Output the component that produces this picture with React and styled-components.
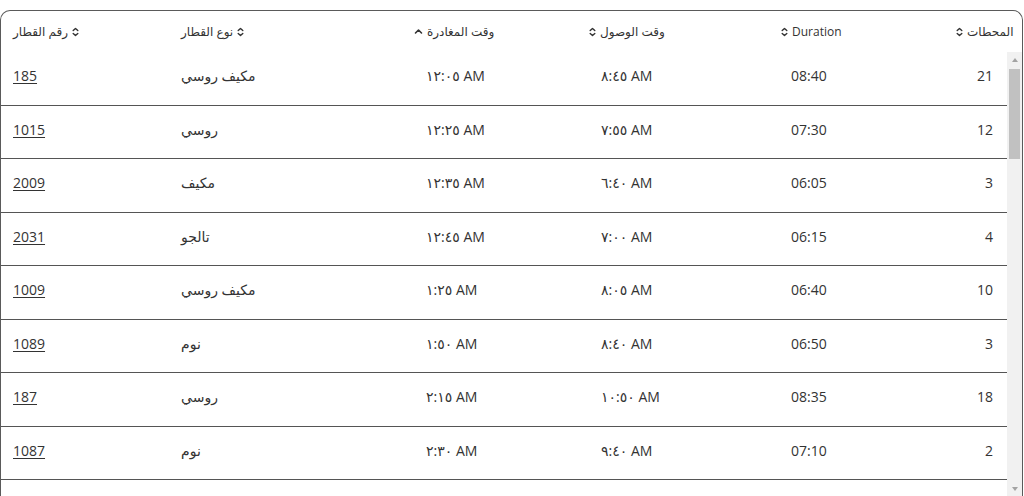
import React from 'react'
import styled, { createGlobalStyle } from 'styled-components'

const GlobalStyle = createGlobalStyle`
  html, body {
    margin: 0;
    padding: 0;
    background: #fff;
    font-family: "Open Sans", "DejaVu Sans", sans-serif;
    color: #2b2b2b;
    overflow: hidden;
  }
`

const Card = styled.div`
  margin-top: 10px;
  width: 1023px;
  height: calc(100vh - 10px);
  box-sizing: border-box;
  border: 1px solid #5a5a5a;
  border-bottom: none;
  border-radius: 10px 10px 0 0;
  display: flex;
  flex-direction: column;
  overflow: hidden;
`

const HeaderRow = styled.div`
  display: grid;
  grid-template-columns: 168px 233px 175px 192px 175px 1fr;
  height: 41px;
  align-items: center;
  flex-shrink: 0;
`

const HeaderCell = styled.div`
  display: flex;
  align-items: center;
  gap: 4px;
  padding-left: 12px;
  font-size: 12px;
  color: #333;
  cursor: pointer;
  white-space: nowrap;
`

const BodyWrap = styled.div`
  flex: 1;
  min-height: 0;
  display: flex;
`

const Rows = styled.div`
  flex: 1;
  overflow: hidden;
`

const Rail = styled.div`
  width: 15px;
  flex-shrink: 0;
  background: #f1f1f1;
  display: flex;
  flex-direction: column;
  align-items: center;
`

const RailButton = styled.div`
  width: 15px;
  height: 15px;
  display: flex;
  align-items: center;
  justify-content: center;
  flex-shrink: 0;
`

const RailTrack = styled.div`
  flex: 1;
  width: 100%;
  padding: 2px 2px 0 2px;
  box-sizing: border-box;
`

const Thumb = styled.div`
  height: 90px;
  background: #c1c1c1;
`

const Triangle = styled.div`
  width: 0;
  height: 0;
  border-left: 3.5px solid transparent;
  border-right: 3.5px solid transparent;
  ${p => (p.$down ? 'border-top: 4px solid #a3a3a3;' : 'border-bottom: 4px solid #a3a3a3;')}
`

const Row = styled.div`
  display: grid;
  grid-template-columns: 168px 245px 175px 190px 1fr 60px;
  height: 53.5px;
  box-sizing: border-box;
  border-bottom: 1px solid #555;
  align-items: center;
  padding-bottom: 5px;
`

const Cell = styled.div`
  font-size: 14px;
  color: #333;
  padding: ${p => (p.$end ? '0 14px 0 0' : '0 0 0 12px')};
  text-align: ${p => (p.$end ? 'right' : 'left')};
  white-space: nowrap;
`

const TrainLink = styled.a`
  color: #333;
  text-decoration: underline;
  text-underline-offset: 2px;
`

const SortIcon = ({ up }) =>
  up ? (
    <svg width="9" height="9" viewBox="0 0 9 9" fill="none" stroke="#333" strokeWidth="1.6" strokeLinecap="round" strokeLinejoin="round">
      <path d="M1.5 6 L4.5 3 L7.5 6" />
    </svg>
  ) : (
    <svg width="7" height="10" viewBox="0 0 7 10" fill="none" stroke="#333" strokeWidth="1.4" strokeLinecap="round" strokeLinejoin="round">
      <path d="M1.2 3.6 L3.5 1.4 L5.8 3.6" />
      <path d="M1.2 6.4 L3.5 8.6 L5.8 6.4" />
    </svg>
  )

const baseRows = [
  ['185', 'مكيف روسي', '١٢:٠٥ AM', '٨:٤٥ AM', '08:40', '21'],
  ['1015', 'روسي', '١٢:٢٥ AM', '٧:٥٥ AM', '07:30', '12'],
  ['2009', 'مكيف', '١٢:٣٥ AM', '٦:٤٠ AM', '06:05', '3'],
  ['2031', 'تالجو', '١٢:٤٥ AM', '٧:٠٠ AM', '06:15', '4'],
  ['1009', 'مكيف روسي', '١:٢٥ AM', '٨:٠٥ AM', '06:40', '10'],
  ['1089', 'نوم', '١:٥٠ AM', '٨:٤٠ AM', '06:50', '3'],
  ['187', 'روسي', '٢:١٥ AM', '١٠:٥٠ AM', '08:35', '18'],
  ['1087', 'نوم', '٢:٣٠ AM', '٩:٤٠ AM', '07:10', '2'],
]

// the list keeps going below the fold, like the scrolled table
const rows = Array.from({ length: 36 }, (_, i) => baseRows[i % baseRows.length])

const App = () => (
  <>
    <GlobalStyle />
    <Card>
      <HeaderRow>
        <HeaderCell>
          <span>رقم القطار</span>
          <SortIcon />
        </HeaderCell>
        <HeaderCell>
          <span>نوع القطار</span>
          <SortIcon />
        </HeaderCell>
        <HeaderCell>
          <SortIcon up />
          <span>وقت المغادرة</span>
        </HeaderCell>
        <HeaderCell>
          <SortIcon />
          <span>وقت الوصول</span>
        </HeaderCell>
        <HeaderCell>
          <SortIcon />
          <span>Duration</span>
        </HeaderCell>
        <HeaderCell>
          <SortIcon />
          <span>المحطات</span>
        </HeaderCell>
      </HeaderRow>
      <BodyWrap>
        <Rows>
          {rows.map((r, i) => (
            <Row key={i}>
              <Cell>
                <TrainLink href="#">{r[0]}</TrainLink>
              </Cell>
              <Cell>{r[1]}</Cell>
              <Cell>{r[2]}</Cell>
              <Cell>{r[3]}</Cell>
              <Cell>{r[4]}</Cell>
              <Cell $end>{r[5]}</Cell>
            </Row>
          ))}
        </Rows>
        <Rail>
          <RailButton>
            <Triangle />
          </RailButton>
          <RailTrack>
            <Thumb />
          </RailTrack>
          <RailButton>
            <Triangle $down />
          </RailButton>
        </Rail>
      </BodyWrap>
    </Card>
  </>
)

export default App
